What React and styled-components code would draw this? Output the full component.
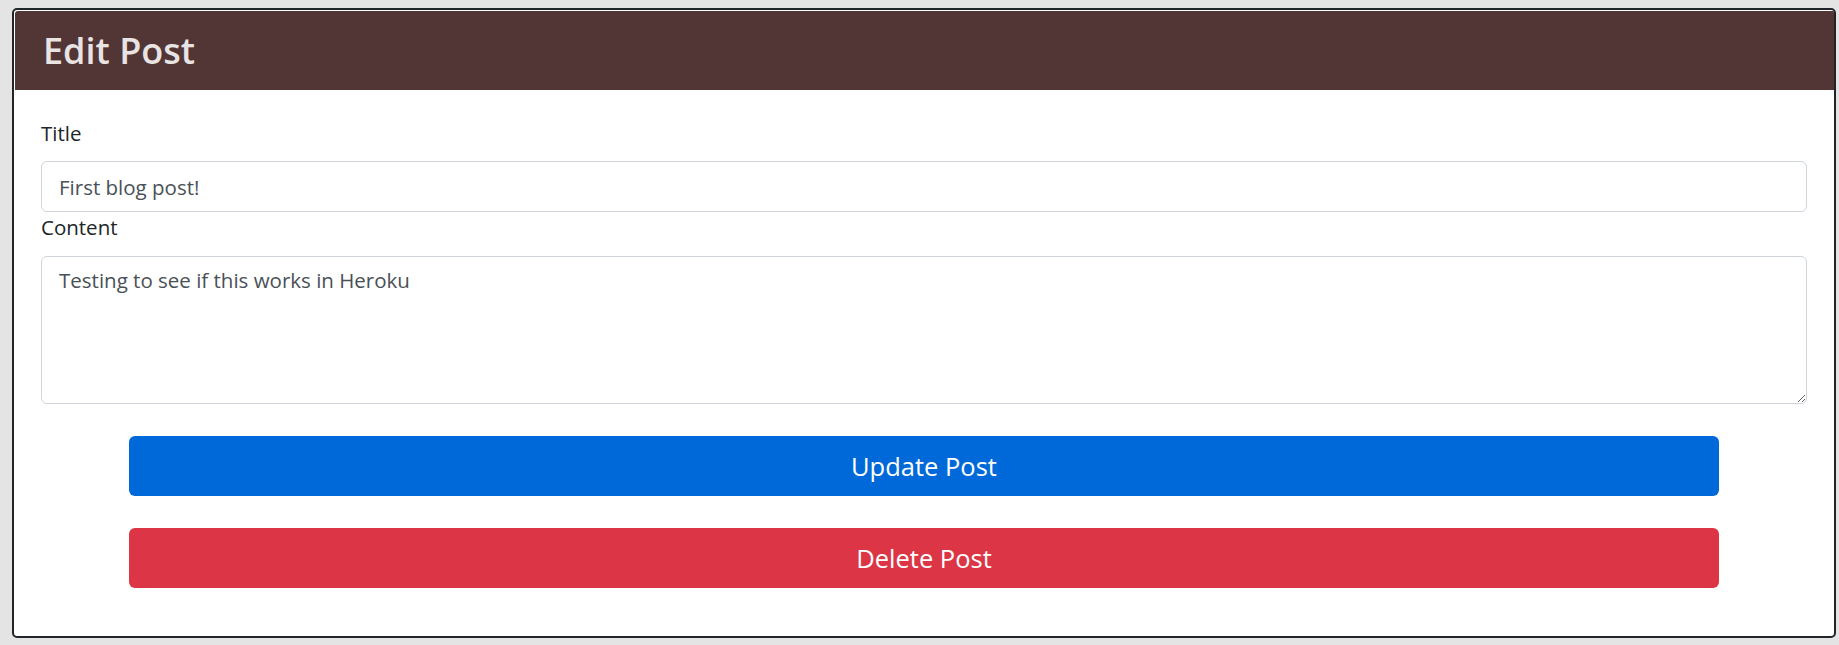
import React from 'react';
import styled, { createGlobalStyle } from 'styled-components';

const GlobalStyle = createGlobalStyle`
  html, body {
    margin: 0;
    padding: 0;
    background: #e4e4e4;
  }
  body {
    font-family: "Open Sans", "Liberation Sans", sans-serif;
    color: #212529;
  }
  * {
    box-sizing: border-box;
  }
`;

const Page = styled.div`
  padding: 8px 3px 6px 12px;
`;

const Card = styled.div`
  background: #fff;
  border: 2px solid #212529;
  border-radius: 5px;
  padding: 1px 0 0 1px;
  overflow: hidden;
`;

const CardHeader = styled.div`
  background: #523535;
  border-top-left-radius: 3px;
  height: 79px;
  display: flex;
  align-items: center;
  padding: 0 28px;
`;

const Heading = styled.h2`
  margin: 0;
  font-size: 36px;
  font-weight: 600;
  color: #e9e4e4;
`;

const CardBody = styled.form`
  padding: 28px 27px 48px 26px;
`;

const Label = styled.label`
  display: block;
  font-size: 20.5px;
  line-height: 30px;
  margin-bottom: ${(p) => p.$gap || 13}px;
`;

const Field = styled.input`
  display: block;
  width: 100%;
  height: 51px;
  padding: 0 17px;
  border: 1px solid #ced4da;
  border-radius: 6px;
  font-family: inherit;
  font-size: 20.5px;
  color: #495057;
  background: #fff;
  outline: none;
`;

const Area = styled.textarea`
  display: block;
  width: 100%;
  height: 148px;
  padding: 8px 17px;
  border: 1px solid #ced4da;
  border-radius: 6px;
  font-family: inherit;
  font-size: 20.5px;
  line-height: 1.5;
  color: #495057;
  background: #fff;
  resize: vertical;
  outline: none;
`;

const Actions = styled.div`
  display: flex;
  flex-direction: column;
  align-items: center;
  gap: 32px;
  margin-top: 32px;
`;

const Button = styled.button`
  width: 90%;
  height: 60px;
  border: none;
  border-radius: 6px;
  background: ${(p) => (p.$danger ? '#dc3545' : '#0069d9')};
  color: #fff;
  font-family: inherit;
  font-size: 25.5px;
  cursor: pointer;
`;

export default function App() {
  return (
    <>
      <GlobalStyle />
      <Page>
        <Card>
          <CardHeader>
            <Heading>Edit Post</Heading>
          </CardHeader>
          <CardBody onSubmit={(e) => e.preventDefault()}>
            <Label htmlFor="title">Title</Label>
            <Field id="title" defaultValue="First blog post!" />
            <Label htmlFor="content" $gap={14}>Content</Label>
            <Area id="content" defaultValue="Testing to see if this works in Heroku" />
            <Actions>
              <Button type="submit">Update Post</Button>
              <Button type="button" $danger>Delete Post</Button>
            </Actions>
          </CardBody>
        </Card>
      </Page>
    </>
  );
}
